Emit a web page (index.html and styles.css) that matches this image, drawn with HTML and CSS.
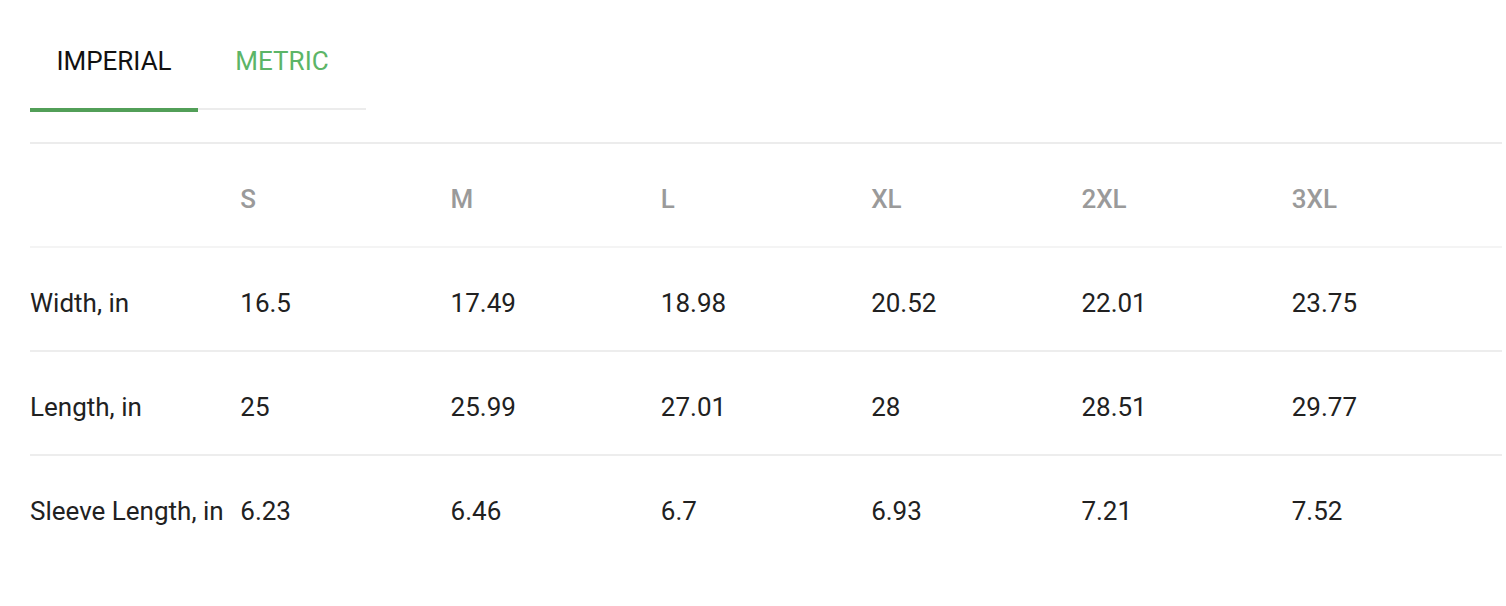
FILE: index.html
```html
<!DOCTYPE html>
<html>
<head>
<meta charset="utf-8">
<link rel="stylesheet" href="styles.css">
</head>
<body>
<div class="page">
  <div class="tabs">
    <div class="tab tab-active">IMPERIAL</div>
    <div class="tab">METRIC</div>
  </div>
  <table class="sizes">
    <thead>
      <tr class="head-row">
        <th></th><th>S</th><th>M</th><th>L</th><th>XL</th><th>2XL</th><th>3XL</th>
      </tr>
    </thead>
    <tbody>
      <tr>
        <td>Width, in</td><td>16.5</td><td>17.49</td><td>18.98</td><td>20.52</td><td>22.01</td><td>23.75</td>
      </tr>
      <tr>
        <td>Length, in</td><td>25</td><td>25.99</td><td>27.01</td><td>28</td><td>28.51</td><td>29.77</td>
      </tr>
      <tr class="last-row">
        <td>Sleeve Length, in</td><td>6.23</td><td>6.46</td><td>6.7</td><td>6.93</td><td>7.21</td><td>7.52</td>
      </tr>
    </tbody>
  </table>
</div>
</body>
</html>
```

FILE: styles.css
```css
html, body {
  margin: 0;
  padding: 0;
  background: #fff;
}

body {
  font-family: Roboto, "Liberation Sans", Arial, sans-serif;
  color: #212121;
}

.page {
  padding-left: 30px;
  width: 1472px;
}

.tabs {
  display: flex;
  align-items: flex-start;
}

.tab {
  width: 168px;
  box-sizing: border-box;
  padding: 46px 0 32px;
  font-size: 26px;
  line-height: 30px;
  text-align: center;
  color: #5cb567;
  border-bottom: 2px solid #ececec;
}

.tab-active {
  color: #111;
  border-bottom: 4px solid #529f58;
}

.sizes {
  margin-top: 30px;
  width: 1472px;
  table-layout: fixed;
  border-collapse: collapse;
  border-top: 2px solid #ececec;
}

.sizes th,
.sizes td {
  padding: 40px 0 32px;
  font-size: 26px;
  line-height: 30px;
  text-align: left;
  white-space: nowrap;
  border-bottom: 2px solid #ededed;
}

.sizes th {
  font-weight: 500;
  color: #9a9a9a;
}

.head-row th {
  border-bottom-color: #f4f4f4;
}

.sizes td {
  color: #212121;
}

.last-row td {
  border-bottom: none;
}
```
